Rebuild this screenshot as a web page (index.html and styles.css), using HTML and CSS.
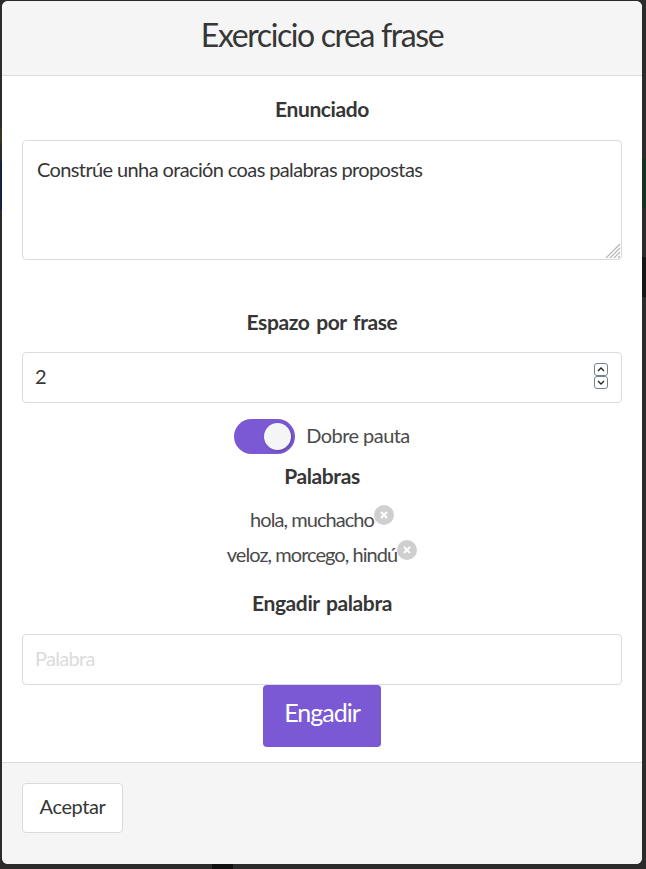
FILE: index.html
```html
<!DOCTYPE html>
<html lang="gl">
<head>
<meta charset="utf-8">
<title>Exercicio crea frase</title>
<link rel="stylesheet" href="styles.css">
</head>
<body>
<div class="modal">
  <header class="modal-head"><h1 class="title">Exercicio crea frase</h1></header>
  <section class="modal-body">
    <h2 class="label">Enunciado</h2>
    <div class="area-wrap">
      <textarea class="area">Constrúe unha oración coas palabras propostas</textarea>
      <svg class="grip" width="16" height="16" viewBox="0 0 16 16"><path d="M1 15 15 1M5 15 15 5M9 15 15 9M13 15 15 13" stroke="#b5b5b5" stroke-width="1.2" fill="none"/></svg>
    </div>
    <h2 class="label label-space">Espazo por frase</h2>
    <div class="num-wrap">
      <input class="field field-num" type="text" value="2">
      <span class="spin">
        <span class="spin-btn"><svg width="14" height="13" viewBox="0 0 14 13"><path d="M4 8 7 5 10 8" stroke="#222" stroke-width="1.3" fill="none"/></svg></span>
        <span class="spin-btn"><svg width="14" height="13" viewBox="0 0 14 13"><path d="M4 5 7 8 10 5" stroke="#222" stroke-width="1.3" fill="none"/></svg></span>
      </span>
    </div>
    <div class="switch-row">
      <span class="switch"><span class="knob"></span></span>
      <span class="switch-text">Dobre pauta</span>
    </div>
    <h2 class="label label-words">Palabras</h2>
    <div class="words">
      <div class="word">hola, muchacho<span class="del"><svg width="20" height="20" viewBox="0 0 20 20"><path d="M7 7 13 13M13 7 7 13" stroke="#fff" stroke-width="2" fill="none"/></svg></span></div>
      <div class="word">veloz, morcego, hindú<span class="del"><svg width="20" height="20" viewBox="0 0 20 20"><path d="M7 7 13 13M13 7 7 13" stroke="#fff" stroke-width="2" fill="none"/></svg></span></div>
    </div>
    <h2 class="label label-add">Engadir palabra</h2>
    <input class="field field-word" type="text" placeholder="Palabra">
    <button class="add">Engadir</button>
  </section>
  <footer class="modal-foot"><button class="accept">Aceptar</button></footer>
</div>
</body>
</html>
```
FILE: styles.css
```css
html{
  height:100%;
  background-color:#2b2b2b;
  background-repeat:no-repeat;
  background-image:
    linear-gradient(#3a3520,#3a3520),
    linear-gradient(#12233a,#12233a),
    linear-gradient(#13331e,#13331e),
    linear-gradient(#161616,#161616),
    linear-gradient(#111,#111);
  background-size:2px 15px,2px 49px,4px 49px,4px 40px,21px 5px;
  background-position:0 128px,0 161px,642px 159px,642px 257px,212px 864px;
}
body{margin:0;height:100%;overflow:hidden;font-family:Lato,"Open Sans",sans-serif;color:#363636}
.modal{width:640px;margin:1px 0 0 2px;height:863px;display:flex;flex-direction:column;background:#fff;border-radius:6px;overflow:hidden}
.modal-head{height:75px;flex:none;box-sizing:border-box;background:#f5f5f5;border-bottom:1px solid #dbdbdb;padding-bottom:8px;display:flex;align-items:center;justify-content:center}
.title{margin:0;font-size:32px;font-weight:400;color:#363636;letter-spacing:-1.4px}
.modal-body{flex:1;padding:18px 20px 0;display:flex;flex-direction:column;align-items:center}
.label{margin:0;font-size:21px;font-weight:700;line-height:30px;color:#363636;letter-spacing:-.4px;word-spacing:2px}
.area-wrap{width:100%;position:relative;margin-top:16px;height:120px}
.area{display:block;width:100%;box-sizing:border-box;height:120px;border:1px solid #dbdbdb;border-radius:4px;padding:16px 14px;font:20px Lato,sans-serif;letter-spacing:-.62px;color:#363636;resize:none;outline:0}
.grip{position:absolute;right:1px;bottom:1px}
.label-space{margin-top:47px}
.num-wrap{width:100%;position:relative;margin-top:15px}
.field{display:block;width:100%;box-sizing:border-box;height:51px;border:1px solid #dbdbdb;border-radius:4px;padding:0 12px 4px;font:20px Lato,sans-serif;letter-spacing:-.7px;color:#363636;outline:0}
.field::placeholder{color:#dbdbdb}
.spin{position:absolute;right:14px;top:11px;display:flex;flex-direction:column}
.spin-btn{display:block;width:14px;height:13px;border:1px solid #76838f;border-radius:3px;box-sizing:border-box;line-height:0}
.spin-btn svg{margin:-1px}
.switch-row{display:flex;align-items:center;gap:11px;margin-top:16px}
.switch{width:61px;height:35px;border-radius:18px;background:#7b59d5;display:block;position:relative}
.knob{position:absolute;right:4px;top:4px;width:27px;height:27px;border-radius:50%;background:#f5f5f5;box-shadow:1px 1px 3px rgba(0,0,0,.25)}
.switch-text{font-size:20px;letter-spacing:-.55px;color:#4a4a4a;padding-bottom:4px}
.label-words{margin-top:7px}
.words{font-size:20px;letter-spacing:-.95px;color:#4a4a4a;text-align:center;line-height:35px;margin-top:11px}
.del{display:inline-block;width:20px;height:20px;border-radius:50%;background:#cfcfcf;vertical-align:2px;line-height:0}
.label-add{margin-top:16px}
.field-word{margin-top:16px;flex:none}
.add{width:118px;height:62px;flex:none;background:#7b59d5;color:#fff;border:0;border-radius:4px;padding:0 0 8px;font:25px Lato,sans-serif;letter-spacing:-1px}
.modal-foot{height:102px;flex:none;box-sizing:border-box;background:#f5f5f5;border-top:1px solid #dbdbdb;padding:20px}
.accept{display:block;width:101px;height:50px;background:#fff;border:1px solid #dbdbdb;border-radius:4px;padding:0 0 5px;font:20px Lato,sans-serif;letter-spacing:-.4px;color:#363636}
```
